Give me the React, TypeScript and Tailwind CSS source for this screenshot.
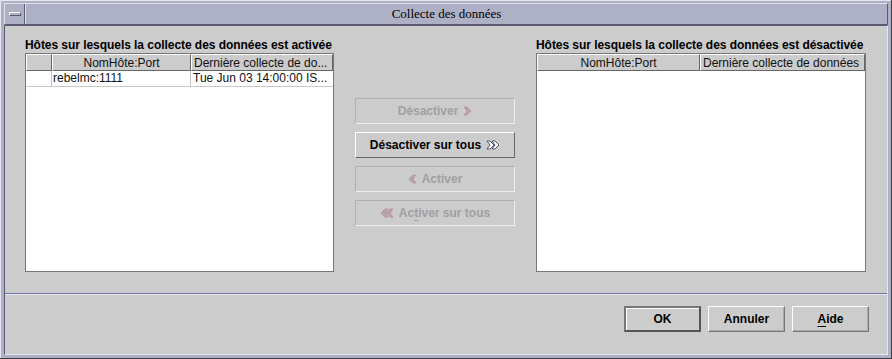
import type { ReactNode } from 'react'

const SANS = 'font-["Liberation_Sans",Arial,sans-serif]'

function Arrow({ dir, double, disabled }: { dir: 'left' | 'right'; double?: boolean; disabled?: boolean }) {
  const fill = disabled ? '#b0a8b0' : '#ffffff'
  const edge = disabled ? '#c48a96' : '#30305a'
  const one = (x: number) =>
    dir === 'right'
      ? `M${x} 1 L${x + 3} 1 L${x + 7} 5 L${x + 3} 9 L${x} 9 L${x + 3} 5 Z`
      : `M${x + 7} 1 L${x + 4} 1 L${x} 5 L${x + 4} 9 L${x + 7} 9 L${x + 4} 5 Z`
  const w = double ? 14 : 9
  return (
    <svg width={w} height={10} viewBox={`0 0 ${w} 10`} aria-hidden className="shrink-0">
      {double && <path d={one(dir === 'right' ? 1 : 6)} fill={fill} stroke={edge} strokeWidth={0.8} />}
      <path d={one(double ? (dir === 'right' ? 6 : 1) : 1)} fill={fill} stroke={edge} strokeWidth={0.8} />
    </svg>
  )
}

function MoveButton({ children, disabled }: { children: ReactNode; disabled?: boolean }) {
  return (
    <button
      type="button"
      className={
        'flex h-[26px] w-[160px] items-center justify-center gap-[5px] text-[12px] font-bold ' +
        (disabled
          ? 'border border-t-[#b0b0b0] border-l-[#b0b0b0] border-r-[#eeeeee] border-b-[#eeeeee] text-[#a0a0a0]'
          : 'border border-t-[#ffffff] border-l-[#ffffff] border-r-[#666666] border-b-[#666666] text-black')
      }
    >
      {children}
    </button>
  )
}

function DialogButton({ children, isDefault }: { children: ReactNode; isDefault?: boolean }) {
  return (
    <button
      type="button"
      className={
        'flex h-[26px] w-[77px] items-center justify-center text-[12px] font-bold text-black ' +
        (isDefault
          ? 'border-2 border-t-[#777777] border-l-[#777777] border-r-[#555555] border-b-[#555555] shadow-[inset_1px_1px_0_#ffffff]'
          : 'border border-t-[#ffffff] border-l-[#ffffff] border-r-[#777777] border-b-[#777777] shadow-[inset_-1px_-1px_0_#aaaaaa]')
      }
    >
      {children}
    </button>
  )
}

function HeaderCell({ children, className = '' }: { children?: ReactNode; className?: string }) {
  return (
    <div
      className={
        'flex h-[17px] items-center overflow-hidden whitespace-nowrap border border-t-[#ffffff] border-l-[#ffffff] border-r-[#666666] border-b-[#666666] bg-[#cccccc] text-[12px] text-[#111111] ' +
        className
      }
    >
      {children}
    </div>
  )
}

export default function App() {
  return (
    <div className={`h-[359px] w-[892px] overflow-hidden bg-[#3c3c46] ${SANS}`}>
      <div className="flex h-[358px] w-[891px] flex-col border-l border-t border-l-[#e6e7f0] border-t-[#e6e7f0] bg-[#aeb1c6] px-[3px] pb-[3px] pt-[2px]">
        {/* title bar */}
        <div className="flex h-[22px] shrink-0 border border-b-[#5a5c70] border-l-[#e0e1ea] border-r-[#5a5c70] border-t-[#e0e1ea]">
          <div className="flex w-[20px] items-center justify-center border-r border-r-[#5a5c70]">
            <span className="block h-[4px] w-[12px] border border-b-[#5a5c70] border-l-[#ffffff] border-r-[#5a5c70] border-t-[#ffffff]" />
          </div>
          <div className="flex flex-1 items-center justify-center border-l border-l-[#e0e1ea] pr-[20px] font-['Liberation_Serif','Times_New_Roman',serif] text-[13px] text-black">
            Collecte des données
          </div>
        </div>

        {/* body */}
        <div className="flex flex-1 flex-col border border-b-[#e6e7f0] border-l-[#5a5c70] border-r-[#e6e7f0] border-t-[#5a5c70] bg-[#cccccc]">
          <div className="flex gap-[21px] pl-[20px] pt-[11px]">
            {/* enabled hosts */}
            <div className="flex w-[309px] flex-col">
              <div className="h-[16px] whitespace-nowrap text-[12px] font-bold leading-[16px] tracking-[-0.05px] text-black">
                Hôtes sur lesquels la collecte des données est activée
              </div>
              <div className="h-[219px] border border-[#777777] bg-white">
                <div className="flex">
                  <HeaderCell className="w-[26px]" />
                  <HeaderCell className="w-[139px] justify-center">NomHôte:Port</HeaderCell>
                  <HeaderCell className="w-[142px] pl-[2px]">Dernière collecte de do...</HeaderCell>
                </div>
                <div className="flex h-[16px] border-b border-b-[#c8c8c8] text-[12px] leading-[15px] text-[#111111]">
                  <div className="w-[26px] border-r border-r-[#c8c8c8]" />
                  <div className="w-[139px] border-r border-r-[#c8c8c8] pl-[1px]">rebelmc:1111</div>
                  <div className="w-[142px] overflow-hidden whitespace-nowrap pl-[2px]">Tue Jun 03 14:00:00 IS...</div>
                </div>
              </div>
            </div>

            {/* move buttons */}
            <div className="flex flex-col gap-[8px] pt-[61px]">
              <MoveButton disabled>
                Désactiver <Arrow dir="right" disabled />
              </MoveButton>
              <MoveButton>
                Désactiver sur tous <Arrow dir="right" double />
              </MoveButton>
              <MoveButton disabled>
                <Arrow dir="left" disabled /> Activer
              </MoveButton>
              <MoveButton disabled>
                <Arrow dir="left" double disabled />
                <span>
                  Ac<span className="underline decoration-[#a0a0a0] underline-offset-[3px]">t</span>iver sur tous
                </span>
              </MoveButton>
            </div>

            {/* disabled hosts */}
            <div className="flex w-[330px] flex-col">
              <div className="h-[16px] whitespace-nowrap text-[12px] font-bold leading-[16px] tracking-[-0.05px] text-black">
                Hôtes sur lesquels la collecte des données est désactivée
              </div>
              <div className="h-[219px] border border-[#777777] bg-white">
                <div className="flex">
                  <HeaderCell className="w-[163px] justify-center">NomHôte:Port</HeaderCell>
                  <HeaderCell className="w-[165px] pl-[2px]">Dernière collecte de données</HeaderCell>
                </div>
              </div>
            </div>
          </div>

          {/* separator */}
          <div className="mt-[21px] h-[1px] bg-[#7272a6]" />
          <div className="h-[1px] bg-[#e8e8ee]" />

          {/* dialog buttons */}
          <div className="flex justify-end gap-[7px] pr-[18px] pt-[11px]">
            <DialogButton isDefault>OK</DialogButton>
            <DialogButton>Annuler</DialogButton>
            <DialogButton>
              <span className="underline underline-offset-[3px]">A</span>ide
            </DialogButton>
          </div>
        </div>
      </div>
    </div>
  )
}
